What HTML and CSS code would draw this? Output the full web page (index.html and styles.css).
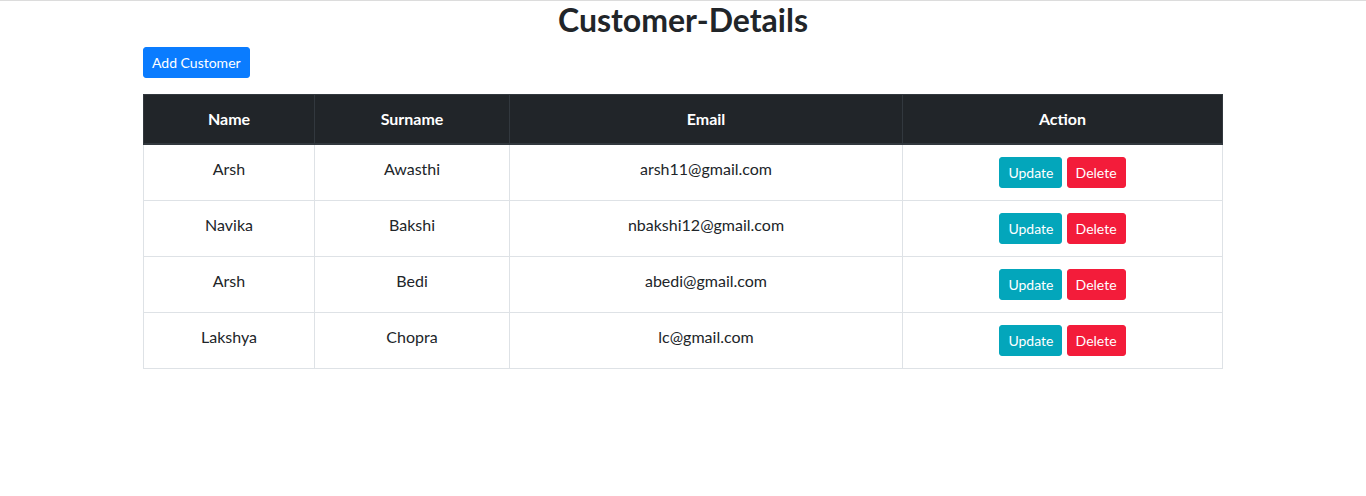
FILE: index.html
```html
<!DOCTYPE html>
<html>
<head>
<meta charset="utf-8">
<link rel="stylesheet" href="styles.css">
</head>
<body>
<div class="page">
  <h2 class="title">Customer-Details</h2>
  <div class="wrap">
    <button class="btn btn-primary add">Add Customer</button>
    <table class="table">
      <colgroup>
        <col class="c1"><col class="c2"><col class="c3"><col class="c4">
      </colgroup>
      <thead>
        <tr>
          <th>Name</th>
          <th>Surname</th>
          <th>Email</th>
          <th>Action</th>
        </tr>
      </thead>
      <tbody>
        <tr><td>Arsh</td><td>Awasthi</td><td>arsh11@gmail.com</td><td><button class="btn btn-info">Update</button> <button class="btn btn-danger">Delete</button></td></tr>
        <tr><td>Navika</td><td>Bakshi</td><td>nbakshi12@gmail.com</td><td><button class="btn btn-info">Update</button> <button class="btn btn-danger">Delete</button></td></tr>
        <tr><td>Arsh</td><td>Bedi</td><td>abedi@gmail.com</td><td><button class="btn btn-info">Update</button> <button class="btn btn-danger">Delete</button></td></tr>
        <tr><td>Lakshya</td><td>Chopra</td><td>lc@gmail.com</td><td><button class="btn btn-info">Update</button> <button class="btn btn-danger">Delete</button></td></tr>
      </tbody>
    </table>
  </div>
</div>
</body>
</html>
```
FILE: styles.css
```css
html, body {
  margin: 0;
  padding: 0;
  background: #fff;
}
body {
  font-family: "Segoe UI", "Lato", "Noto Sans", sans-serif;
  font-size: 16px;
  line-height: 1.5;
  color: #212529;
}
.page {
  border-top: 1px solid #dcdcdc;
}
.title {
  margin: 0 0 8px 0;
  text-align: center;
  font-size: 32px;
  font-weight: 700;
  line-height: 1.2;
  color: #212529;
}
.wrap {
  width: 1080px;
  margin: 0 auto;
}
.btn {
  display: inline-block;
  font-family: inherit;
  font-size: 14px;
  line-height: 1.5;
  padding: 4px 8px;
  border: 1px solid transparent;
  border-radius: 3px;
  color: #fff;
  cursor: pointer;
  vertical-align: middle;
}
.btn-primary { background: #0a7cff; border-color: #0a7cff; }
.btn-info { background: #03a6bb; border-color: #03a6bb; }
.btn-danger { background: #f31c3a; border-color: #f31c3a; }
.add {
  display: block;
  margin-bottom: 16px;
}
.table {
  width: 1079px;
  border-collapse: collapse;
  table-layout: fixed;
  text-align: center;
}
.table th, .table td {
  padding: 12px;
  border: 1px solid #dee2e6;
  vertical-align: top;
}
.table thead th {
  background: #212529;
  color: #fff;
  border-color: #32383e;
  border-bottom: 2px solid #32383e;
  font-weight: 700;
  vertical-align: bottom;
}
.c1 { width: 171px; }
.c2 { width: 195px; }
.c3 { width: 393px; }
.c4 { width: 320px; }
```
